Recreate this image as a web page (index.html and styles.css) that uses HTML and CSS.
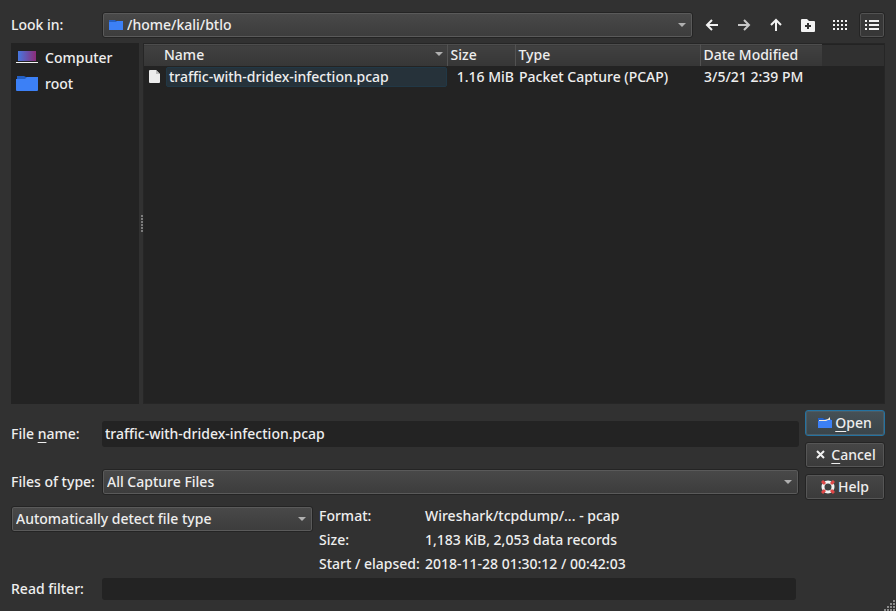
FILE: index.html
```html
<!DOCTYPE html>
<html lang="en">
<head>
<meta charset="utf-8">
<title>Open Capture File</title>
<link rel="stylesheet" href="styles.css">
</head>
<body>
<form class="dialog">
  <header class="look-row">
    <label class="look-label" for="look">Look in:</label>
    <div class="combo look-combo">
      <svg class="combo-icon" width="14" height="12" viewBox="0 0 14 12"><path fill="#235fc4" d="M0 1h6l1 1h6v4H0z"/><path fill="#3c80f6" d="M0 3h7l1-1h6v9H0z"/></svg>
      <select id="look"><option>/home/kali/btlo</option></select>
    </div>
    <nav class="tools">
      <button type="button" aria-label="Back"><svg width="16" height="16" viewBox="0 0 16 16" fill="none" stroke="#f2f2f2" stroke-width="2"><path d="M14 8H3M8 3L3 8l5 5"/></svg></button>
      <button type="button" aria-label="Forward"><svg width="16" height="16" viewBox="0 0 16 16" fill="none" stroke="#c6c6c6" stroke-width="2"><path d="M2 8h11M8 3l5 5-5 5"/></svg></button>
      <button type="button" aria-label="Parent directory"><svg width="16" height="16" viewBox="0 0 16 16" fill="none" stroke="#f2f2f2" stroke-width="2"><path d="M8 14V3M3 8l5-5 5 5"/></svg></button>
      <button type="button" aria-label="Create new folder"><svg width="16" height="16" viewBox="0 0 16 16"><path fill="#f2f2f2" d="M2 2h5l2 2h5q1 0 1 1v9q0 1-1 1H2q-1 0-1-1V3q0-1 1-1z"/><path stroke="#303030" stroke-width="2" d="M8 6v6M5 9h6"/></svg></button>
      <button type="button" aria-label="List view"><svg width="16" height="16" viewBox="0 0 16 16" stroke="#f2f2f2" stroke-width="2" stroke-dasharray="2 2"><path d="M1 4h14M1 8h14M1 12h14"/></svg></button>
      <button type="button" class="pressed" aria-label="Detail view"><svg width="16" height="16" viewBox="0 0 16 16" fill="#f2f2f2"><path d="M1 3h2v2H1zM5 3h10v2H5zM1 7h2v2H1zM5 7h10v2H5zM1 11h2v2H1zM5 11h10v2H5z"/></svg></button>
    </nav>
  </header>

  <main class="browser">
    <ul class="places">
      <li><svg width="22" height="16" viewBox="0 0 22 16"><defs><linearGradient id="screen" x2="1" y2="0"><stop stop-color="#4677e0"/><stop offset="1" stop-color="#8c2c78"/></linearGradient></defs><path fill="url(#screen)" d="M2 1h18v10H2z"/><path fill="#f4f4f4" d="M0 12h22v1H0z"/></svg>Computer</li>
      <li><svg width="22" height="16" viewBox="0 0 22 16"><path fill="#235fc4" d="M1 0h7l2 1h11v4H1z"/><path fill="#3c80f6" d="M0 3h9l2-2h11v13q0 1-1 1H1q-1 0-1-1z"/></svg>root</li>
    </ul>
    <div class="splitter"><i></i><i></i><i></i><i></i><i></i><i></i></div>
    <div class="files">
      <table>
        <colgroup><col class="c-name"><col class="c-size"><col class="c-type"><col class="c-date"><col></colgroup>
        <thead><tr><th class="h-name">Name<svg width="8" height="4" viewBox="0 0 8 4"><path fill="#b0b0b0" d="M0 0h8L4 4z"/></svg></th><th>Size</th><th>Type</th><th>Date Modified</th><td class="rest"></td></tr></thead>
        <tbody><tr><td class="name"><div><svg width="12" height="14" viewBox="0 0 12 14"><path fill="#ececec" d="M1 0h6l4 4v8q0 1-1 1H1q-1 0-1-1V1q0-1 1-1z"/><path fill="#bdbdbd" d="M7 0l4 4H7z"/></svg><span>traffic-with-dridex-infection.pcap</span></div></td><td class="size">1.16 MiB</td><td>Packet Capture (PCAP)</td><td>3/5/21 2:39 PM</td><td></td></tr></tbody>
      </table>
    </div>
  </main>

  <section class="choice">
    <div class="fields">
      <label for="fname">File <u>n</u>ame:</label>
      <input id="fname" type="text" value="traffic-with-dridex-infection.pcap">
      <label for="ftype">Files of type:</label>
      <div class="combo"><select id="ftype"><option>All Capture Files</option></select></div>
    </div>
    <div class="actions">
      <button type="submit" class="btn primary"><svg width="14" height="12" viewBox="0 0 14 12"><path fill="#235fc4" d="M0 1h5l1 1h7v5H0z"/><path fill="#f2e9d8" d="M1 3h6l3-1 2-2v4H1z"/><path fill="#3c80f6" d="M0 4h8l2-1h4v8H0z"/></svg><span><u>O</u>pen</span></button>
      <button type="button" class="btn"><svg width="14" height="12" viewBox="0 0 14 12"><path stroke="#f2f2f2" stroke-width="2" d="M3 2l7 7M10 2l-7 7"/></svg><span><u>C</u>ancel</span></button>
      <button type="button" class="btn"><svg width="14" height="14" viewBox="0 0 14 14" fill="none"><circle cx="7" cy="7" r="5" stroke="#f2f2f2" stroke-width="3"/><path stroke="#e04848" stroke-width="3" d="M1 1l3 3M13 1l-3 3M1 13l3-3M13 13l-3-3"/></svg><span>Help</span></button>
    </div>
  </section>

  <section class="details">
    <div class="combo"><select aria-label="Capture file format"><option>Automatically detect file type</option></select></div>
    <dl>
      <dt>Format:</dt><dd>Wireshark/tcpdump/... - pcap</dd>
      <dt>Size:</dt><dd>1,183 KiB, 2,053 data records</dd>
      <dt>Start / elapsed:</dt><dd>2018-11-28 01:30:12 / 00:42:03</dd>
    </dl>
  </section>

  <footer class="filter">
    <label for="filter">Read filter:</label>
    <input id="filter" type="text">
  </footer>
  <svg class="grip" width="12" height="12" viewBox="0 0 12 12" stroke="#8a8a8a" stroke-width="2" stroke-dasharray="2 1"><path d="M0 11h12M3 8h9M6 5h6M9 2h3"/></svg>
</form>
</body>
</html>
```
FILE: styles.css
```css
* { box-sizing: border-box; }
body {
  margin: 0;
  background: #313131;
  color: #eeeeee;
  font: 500 14px/20px "Noto Sans", "Open Sans", sans-serif;
}
button, input, select { font: inherit; color: inherit; margin: 0; }
u { text-underline-offset: 3px; text-decoration-thickness: 1px; }
svg { flex: none; display: block; }

.dialog {
  position: relative;
  display: flex;
  flex-direction: column;
  min-height: 100vh;
  padding: 11px;
}

.look-row { display: flex; align-items: center; height: 27px; }
.look-label { width: 91px; }
.look-combo { flex: 1; }

.combo { position: relative; height: 26px; }
.combo::after {
  content: "";
  position: absolute;
  right: 7px;
  top: 11px;
  border: 4px solid transparent;
  border-top-color: #b0b0b0;
  border-bottom: 0;
  pointer-events: none;
}
.combo select {
  appearance: none;
  display: block;
  width: 100%;
  height: 26px;
  padding: 0 20px 0 4px;
  border: 1px solid #242424;
  border-radius: 3px;
  background: linear-gradient(#494949, #3c3c3c);
  box-shadow: inset 0 0 0 1px #5a5a5a;
}
.look-combo select { padding-left: 24px; }
.combo-icon { position: absolute; left: 7px; top: 7px; }

.tools { display: flex; gap: 6px; margin-left: 6px; }
.tools button {
  display: grid;
  place-items: center;
  width: 26px;
  height: 26px;
  padding: 0;
  border: 1px solid transparent;
  border-radius: 3px;
  background: none;
}
.tools .pressed {
  border-color: #242424;
  background: #373737;
  box-shadow: inset 0 0 0 1px #525252;
}

.browser { display: flex; flex: 1; margin-top: 5px; }
.places {
  width: 128px;
  margin: 0;
  padding: 2px 5px;
  list-style: none;
  background: #232323;
}
.places li { display: flex; align-items: center; gap: 7px; height: 26px; }
.splitter {
  display: flex;
  flex-direction: column;
  justify-content: center;
  align-items: flex-end;
  gap: 1px;
  width: 4px;
}
.splitter i { width: 2px; height: 2px; background: #7c7c7c; }
.files { flex: 1; border: 1px solid #262626; background: #232323; }

table { width: 100%; table-layout: fixed; border-collapse: collapse; }
.c-name { width: 303px; }
.c-size { width: 68px; }
.c-type { width: 185px; }
.c-date { width: 122px; }
th, td { padding: 0 4px; text-align: left; font-weight: inherit; white-space: nowrap; }
th {
  position: relative;
  height: 21px;
  padding: 0 3px;
  background: linear-gradient(#414141, #363636);
  border-top: 1px solid #4d4d4d;
  border-right: 1px solid #525252;
}
th:nth-child(4) { border-right: 0; }
.h-name { padding-left: 20px; }
.h-name svg { position: absolute; right: 4px; top: 7px; }
.rest { background: #303030; }
tbody td { height: 22px; }
tbody .name { padding: 0; }
.name div { display: flex; align-items: center; gap: 5px; padding-left: 5px; }
.name span {
  flex: 1;
  padding-left: 2px;
  border: 1px solid #213846;
  border-radius: 2px;
  background: #26323a;
  line-height: 18px;
}
tbody .size { padding: 0 1px 0 0; text-align: right; }

.choice { display: flex; gap: 6px; margin-top: 6px; }
.fields {
  flex: 1;
  display: grid;
  grid-template-columns: 91px 1fr;
  grid-template-rows: 48px 48px;
  align-items: center;
}
input {
  width: 100%;
  height: 26px;
  padding: 0 3px 1px;
  border: 0;
  border-radius: 3px;
  background: #232323;
}
.actions { width: 80px; display: grid; gap: 6px; align-content: start; }
.btn {
  display: flex;
  align-items: center;
  justify-content: center;
  gap: 3px;
  height: 26px;
  padding: 0;
  border: 1px solid #242424;
  border-radius: 3px;
  background: linear-gradient(#464646, #3a3a3a);
  box-shadow: inset 0 0 0 1px #565656;
}
.primary {
  border-color: #2472a0;
  background: linear-gradient(#465055, #3a4449);
  box-shadow: inset 0 0 0 1px #4b5c66;
}

.details { display: flex; gap: 6px; }
.details .combo { width: 302px; }
dl {
  display: grid;
  grid-template-columns: 106px 1fr;
  flex: 1;
  margin: -2px 0 0;
  line-height: 24px;
}
dd { margin: 0; }

.filter { display: flex; align-items: center; margin: 2px 89px 0 0; }
.filter label { width: 91px; flex: none; }
.filter input { height: 22px; }
.grip { position: absolute; right: 0; bottom: 0; }
```
